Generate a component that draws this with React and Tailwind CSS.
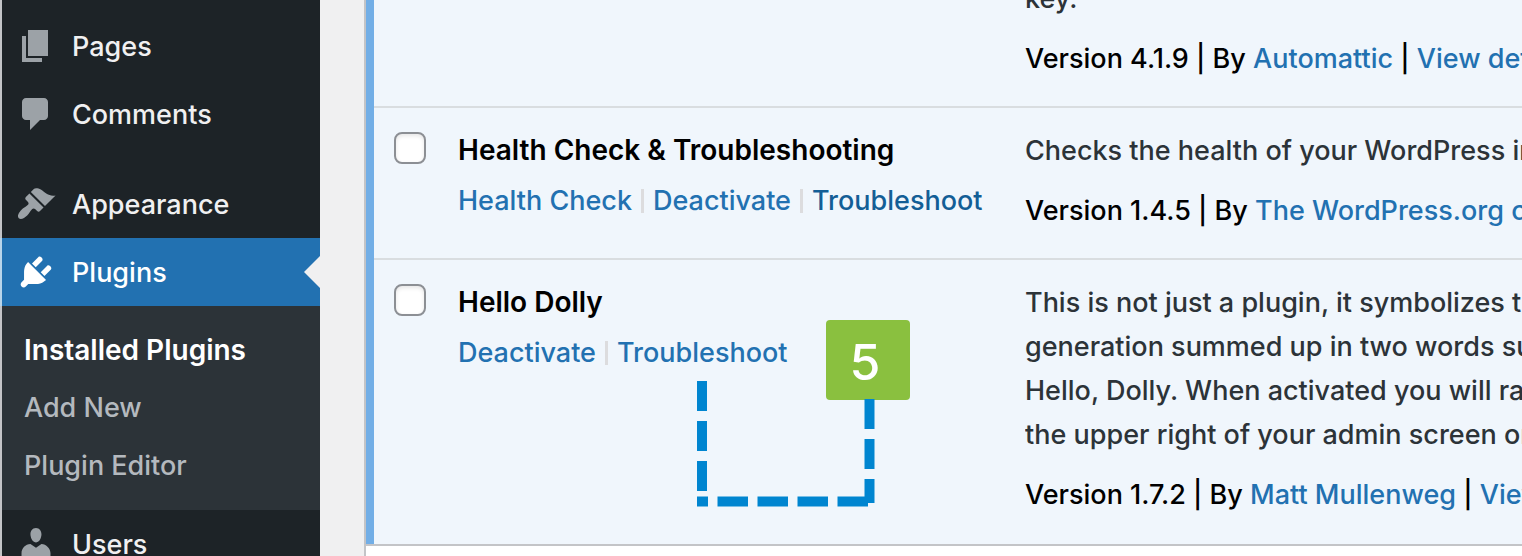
import React from 'react';
import clsx from 'clsx';

const ICONS = {
  pages: 'M6 15V2h10v13H6zm-1 1h8v2H3V5h2v11z',
  comments:
    'M5 2h9q.82 0 1.41.59T16 4v7q0 .82-.59 1.41T14 13h-2l-5 5v-5H5q-.82 0-1.41-.59T3 11V4q0-.82.59-1.41T5 2z',
  appearance:
    'M14.48 11.06L7.41 3.99l1.5-1.5c.5-.56 2.3-.47 3.51.32 1.21.8 1.43 1.28 2.91 2.1 1.18.64 2.45 1.26 4.45.85zm-.71.71L6.7 4.7 4.93 6.47c-.39.39-.39 1.02 0 1.41l1.06 1.06c.39.39.39 1.03 0 1.42-.6.6-1.43 1.11-2.21 1.69-.35.26-.7.53-1.01.84C1.43 14.23.4 16.08 1.4 17.07c.99 1 2.84-.03 4.18-1.36.31-.31.58-.66.85-1.02.57-.78 1.08-1.61 1.69-2.21.39-.39 1.02-.39 1.41 0l1.06 1.06c.39.39 1.02.39 1.41 0z',
  plugins:
    'M13.11 4.36L9.87 7.6 8 5.73l3.24-3.24c.35-.34 1.05-.2 1.56.32.52.51.66 1.21.31 1.55zm-8 1.77l.91-1.12 9.01 9.01-1.19.84c-.71.71-2.63 1.16-3.82 1.16H6.14L4.9 17.26c-.59.59-1.54.59-2.12 0-.59-.58-.59-1.53 0-2.12l1.24-1.24v-3.88c0-1.13.4-3.19 1.09-3.89zm7.26 3.97l3.24-3.24c.34-.35 1.04-.21 1.55.31.52.51.66 1.21.31 1.55l-3.24 3.25z',
  users:
    'M10 9.25c-2.27 0-2.73-3.44-2.73-3.44C7 4.02 7.82 2 9.97 2c2.16 0 2.98 2.02 2.71 3.81 0 0-.41 3.44-2.68 3.44zm0 2.57L12.72 10c2.39 0 4.52 2.33 4.52 4.53v2.49s-3.65 1.13-7.24 1.13c-3.65 0-7.24-1.13-7.24-1.13v-2.49c0-2.25 1.94-4.48 4.47-4.48z',
};

const submenu = ['Installed Plugins', 'Add New', 'Plugin Editor'];

const plugins = [
  {
    id: 'akismet',
    lines: ['key.'],
    version: '4.1.9',
    author: 'Automattic',
  },
  {
    id: 'health-check',
    name: 'Health Check & Troubleshooting',
    actions: ['Health Check', 'Deactivate', 'Troubleshoot'],
    hovered: 'Troubleshoot',
    lines: ['Checks the health of your WordPress install'],
    version: '1.4.5',
    author: 'The WordPress.org community',
  },
  {
    id: 'hello-dolly',
    name: 'Hello Dolly',
    actions: ['Deactivate', 'Troubleshoot'],
    step: 5,
    lines: [
      'This is not just a plugin, it symbolizes the',
      'generation summed up in two words sung',
      'Hello, Dolly. When activated you will randomly',
      'the upper right of your admin screen on',
    ],
    version: '1.7.2',
    author: 'Matt Mullenweg',
  },
];

const MenuItem = ({ icon, label, current }) => (
  <a
    href="#"
    className={clsx(
      'relative flex items-center gap-4 border-l-2 py-[14px] pl-[14px] leading-[38px]',
      current
        ? 'border-[#b9d5ea] bg-[#2271b1] text-white'
        : 'border-[#c3c4c7] bg-[#1d2327] text-[#f0f0f1]'
    )}
  >
    <svg
      viewBox="0 0 20 20"
      aria-hidden="true"
      className={clsx('h-10 w-10 shrink-0', current ? 'fill-white' : 'fill-[#9ca2a7]')}
    >
      <path d={ICONS[icon]} />
    </svg>
    <span className="pt-0.5">{label}</span>
    {current && (
      <span className="absolute right-0 top-[18px] border-y-16 border-r-16 border-y-transparent border-r-[#f0f0f1]" />
    )}
  </a>
);

const Sidebar = () => (
  <nav className="w-80 shrink-0 bg-[#1d2327]">
    <div className="h-3 border-l-2 border-[#c3c4c7]" />
    <MenuItem icon="pages" label="Pages" />
    <MenuItem icon="comments" label="Comments" />
    <div className="h-[22px] border-l-2 border-[#c3c4c7]" />
    <MenuItem icon="appearance" label="Appearance" />
    <MenuItem icon="plugins" label="Plugins" current />
    <ul className="border-l-2 border-[#c3c4c7] bg-[#2c3338] py-[15px] leading-[58px]">
      {submenu.map((item, i) => (
        <li key={item}>
          <a
            href="#"
            className={clsx(
              'block pl-[22px]',
              i === 0 ? 'text-[28px] font-semibold text-white' : 'text-[#b4b9be]'
            )}
          >
            {item}
          </a>
        </li>
      ))}
    </ul>
    <MenuItem icon="users" label="Users" />
  </nav>
);

// Numbered marker with the dashed lead that runs back to the link
const StepCallout = ({ step }) => (
  <>
    <svg
      viewBox="0 0 180 128"
      aria-hidden="true"
      className="absolute left-[254px] top-[120px] z-10 h-32 w-[180px] fill-none stroke-[#0085d0] stroke-10"
    >
      <path d="M6 1V111" strokeDasharray="30 10" />
      <path d="M1 121.5H12M21.5 121.5H52M61.5 121.5H92M101.5 121.5H132M141.5 121.5H172" />
      <path d="M173.5 19V123" strokeDasharray="30 10" />
    </svg>
    <span className="absolute left-96 top-[60px] flex h-20 w-[84px] items-center justify-center rounded bg-[#8ac03f] pt-1 pr-1.5 text-[50px] leading-none font-medium text-white">
      {step}
    </span>
  </>
);

const PluginRow = ({ plugin }) => (
  <tr className="border-b-2 border-[#d9dde0] bg-[#f0f6fc] align-top last:border-b-0">
    <td className="pl-5 pt-6">
      {plugin.name && (
        <input
          type="checkbox"
          aria-label={`Select ${plugin.name}`}
          className="block h-8 w-8 appearance-none rounded-lg border-2 border-[#8c8f94] bg-white shadow-[inset_0_2px_4px_rgba(0,0,0,0.1)]"
        />
      )}
    </td>
    <td className="relative whitespace-nowrap pl-4 pt-[21px]">
      {plugin.name && (
        <>
          <strong className="block text-[28px] leading-[42px] font-semibold text-black">
            {plugin.name}
          </strong>
          <div className="flex gap-[9px] pt-2.5 leading-[40px]">
            {plugin.actions.map((action, i) => (
              <React.Fragment key={action}>
                {i > 0 && <span className="my-2 w-[3px] bg-[#dcdcde]" />}
                <a
                  href="#"
                  className={plugin.hovered === action ? 'text-[#135e96]' : 'text-[#2271b1]'}
                >
                  {action}
                </a>
              </React.Fragment>
            ))}
          </div>
        </>
      )}
      {plugin.step && <StepCallout step={plugin.step} />}
    </td>
    <td className="overflow-hidden whitespace-nowrap pb-[25px] pt-[21px] leading-[44px]">
      <p className="text-[#2c3338]">
        {plugin.lines.map((line) => (
          <span key={line} className="block">
            {line}
          </span>
        ))}
      </p>
      <p className="pt-4 text-black">
        Version {plugin.version} | By{' '}
        <a href="#" className="text-[#2271b1]">
          {plugin.author}
        </a>{' '}
        |{' '}
        <a href="#" className="text-[#2271b1]">
          View details
        </a>
      </p>
    </td>
  </tr>
);

const App = () => (
  <div className="flex h-screen overflow-hidden bg-[#f0f0f1] font-['Inter',sans-serif] text-[27px] font-medium">
    <Sidebar />
    <main className="ml-11 min-w-0 flex-1 overflow-hidden border-l-2 border-[#c3c4c7] bg-white">
      <div className="-mt-11 border-b-2 border-[#c3c4c7]">
        <div className="border-l-8 border-[#72aee6] bg-[#f0f6fc] pb-0.5">
          <table className="w-full table-fixed border-collapse">
            <colgroup>
              <col className="w-[68px]" />
              <col className="w-[583px]" />
              <col />
            </colgroup>
            <tbody>
              {plugins.map((plugin) => (
                <PluginRow key={plugin.id} plugin={plugin} />
              ))}
            </tbody>
          </table>
        </div>
      </div>
    </main>
  </div>
);

export default App;
